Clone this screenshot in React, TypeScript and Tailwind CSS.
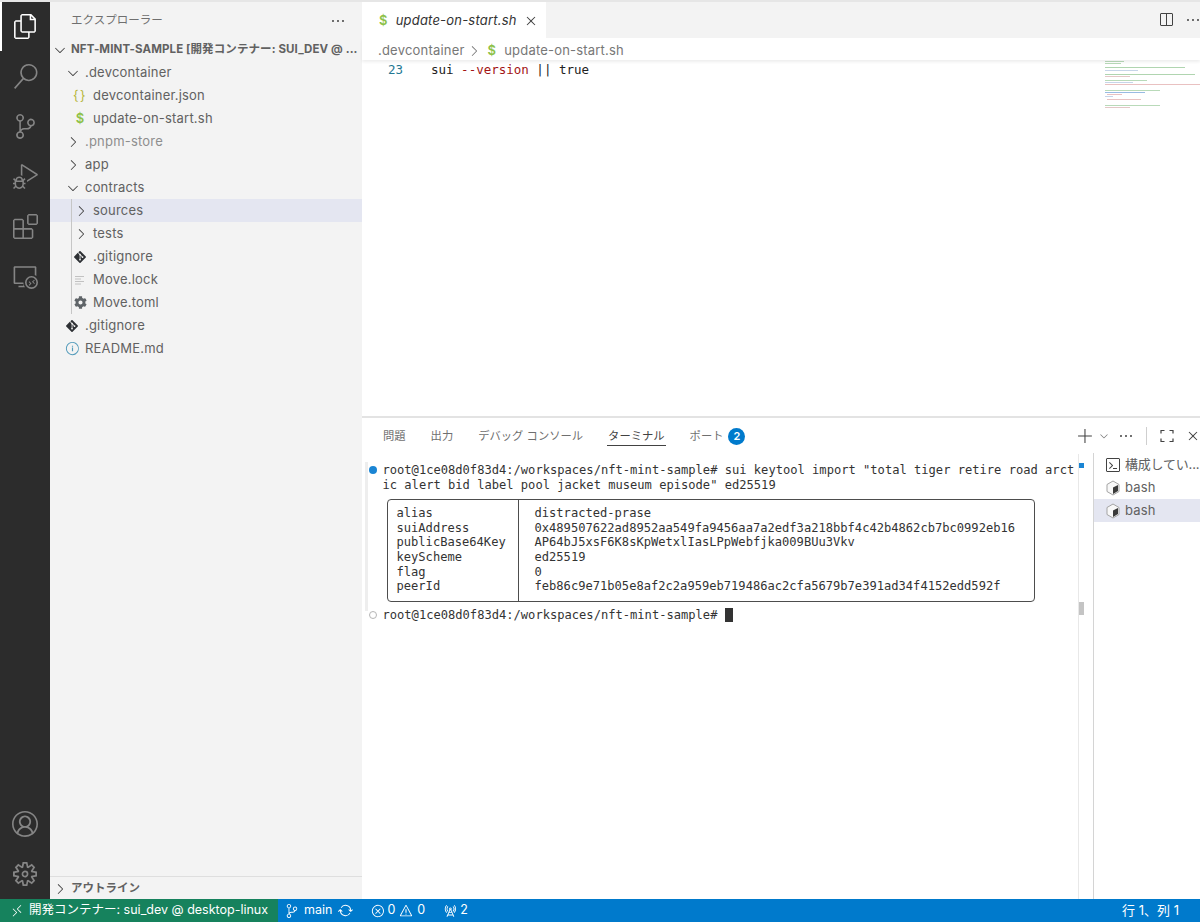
import React from "react";
import {
  VscAccount,
  VscAdd,
  VscChevronDown,
  VscChevronRight,
  VscClose,
  VscDebugAlt,
  VscEllipsis,
  VscError,
  VscExtensions,
  VscFiles,
  VscInfo,
  VscRadioTower,
  VscRemote,
  VscRemoteExplorer,
  VscSearch,
  VscSettingsGear,
  VscSourceControl,
  VscSplitHorizontal,
  VscSync,
  VscTerminal,
  VscWarning,
} from "react-icons/vsc";
import { SiGit } from "react-icons/si";
import { FaCog } from "react-icons/fa";

const UI_FONT = "font-['Inter','Noto_Sans_CJK_JP',sans-serif]";
const MONO_FONT = "font-['DejaVu_Sans_Mono','Noto_Sans_CJK_JP',monospace]";

function Dollar({ className = "" }: { className?: string }) {
  return <span className={`font-semibold text-[#8dc149] text-[13px] ${className}`}>$</span>;
}

function GitIcon() {
  return <SiGit size={12} className="text-[#2d3034]" />;
}

function LockIcon() {
  return (
    <svg width="12" height="12" viewBox="0 0 12 12" stroke="#c2c2c2" strokeWidth="1">
      <path d="M1 2.5h9M1 5h6M1 7.500h9M1 10h6" />
    </svg>
  );
}

function CornersIcon() {
  return (
    <svg width="16" height="16" viewBox="0 0 16 16" fill="none" stroke="#424242" strokeWidth="1.2">
      <path d="M2 5.500V2.500h3.500M10.500 2.500H14v3M14 10.500v3h-3.500M5.500 13.500H2v-3" />
    </svg>
  );
}

function BashIcon() {
  return (
    <svg width="16" height="16" viewBox="0 0 16 16" className="mr-[4px] shrink-0">
      <path d="M8 1l6 3.500v7L8 15l-6-3.500v-7z" fill="#f8f8f8" stroke="#a3a3a3" strokeWidth="1" />
      <path d="M8 7.500l5-2.500v6l-5 3z" fill="#3a3a3a" />
    </svg>
  );
}

type Row = {
  label: string;
  depth: number;
  kind: "open" | "closed" | "file";
  icon?: React.ReactNode;
  muted?: boolean;
  selected?: boolean;
  guide?: boolean;
};

const rows: Row[] = [
  { label: ".devcontainer", depth: 1, kind: "open" },
  {
    label: "devcontainer.json",
    depth: 2,
    kind: "file",
    icon: <span className="text-[13px] tracking-[1.500px] text-[#b7b73b]">{"{}"}</span>,
  },
  { label: "update-on-start.sh", depth: 2, kind: "file", icon: <Dollar /> },
  { label: ".pnpm-store", depth: 1, kind: "closed", muted: true },
  { label: "app", depth: 1, kind: "closed" },
  { label: "contracts", depth: 1, kind: "open" },
  { label: "sources", depth: 2, kind: "closed", selected: true, guide: true },
  { label: "tests", depth: 2, kind: "closed", guide: true },
  { label: ".gitignore", depth: 2, kind: "file", icon: <GitIcon />, guide: true },
  { label: "Move.lock", depth: 2, kind: "file", icon: <LockIcon />, guide: true },
  { label: "Move.toml", depth: 2, kind: "file", icon: <FaCog size={13} className="text-[#5f6468]" />, guide: true },
  { label: ".gitignore", depth: 1, kind: "file", icon: <GitIcon /> },
  { label: "README.md", depth: 1, kind: "file", icon: <VscInfo size={15} className="text-[#519aba]" /> },
];

function TreeRow({ row }: { row: Row }) {
  const chevronLeft = row.depth === 1 ? "pl-[15px]" : "pl-[23px]";
  const fileLeft = row.depth === 1 ? "pl-[14px]" : "pl-[22px]";
  return (
    <div
      className={`relative flex h-[23px] items-center text-[13px] tracking-[0.2px] ${row.selected ? "bg-[#e4e6f1]" : ""} ${
        row.kind === "file" ? fileLeft : chevronLeft
      } ${row.muted ? "text-[#8e8e8e]" : "text-[#616161]"}`}
    >
      {row.guide && <span className="absolute left-[21px] top-0 h-full w-px bg-[#c6c6c6]" />}
      {row.kind === "file" ? (
        <span className="mr-[5px] flex w-4 shrink-0 items-center justify-center">{row.icon}</span>
      ) : row.kind === "open" ? (
        <VscChevronDown size={16} className="mr-1 shrink-0 text-[#424242]" />
      ) : (
        <VscChevronRight size={16} className="mr-1 shrink-0 text-[#424242]" />
      )}
      <span>{row.label}</span>
    </div>
  );
}

function ActivityBar() {
  const top = [VscFiles, VscSearch, VscSourceControl, VscDebugAlt, VscExtensions, VscRemoteExplorer];
  return (
    <div className="flex w-[50px] shrink-0 flex-col justify-between bg-[#2c2c2c]">
      <div>
        {top.map((Icon, i) => (
          <div
            key={i}
            className={`flex items-center justify-center ${
              i === 0 ? "h-[49px] border-l-2 border-white pr-[2px] text-white" : "h-[50px] text-[#858585]"
            }`}
          >
            <Icon size={25} />
          </div>
        ))}
      </div>
      <div>
        <div className="flex h-[50px] items-center justify-center text-[#858585]">
          <VscAccount size={26} />
        </div>
        <div className="flex h-[50px] items-center justify-center text-[#858585]">
          <VscSettingsGear size={24} />
        </div>
      </div>
    </div>
  );
}

function Sidebar() {
  return (
    <div className="flex w-[312px] shrink-0 flex-col bg-[#f3f3f3]">
      <div className="flex h-[36px] items-center justify-between pl-[21px] pr-[16px] pt-px text-[11.500px] text-[#6f6f6f]">
        <span>エクスプローラー</span>
        <VscEllipsis size={16} className="text-[#424242]" />
      </div>
      <div className="flex h-[23px] items-center pl-[2px] text-[11.500px] font-bold tracking-[0.1px] text-[#616161]">
        <VscChevronDown size={16} className="mr-[3px] shrink-0 text-[#424242]" />
        <span className="whitespace-nowrap">NFT-MINT-SAMPLE [開発コンテナー: SUI_DEV @ ...</span>
      </div>
      <div className="flex-1">
        {rows.map((row, i) => (
          <TreeRow key={i} row={row} />
        ))}
      </div>
      <div className="flex h-[23px] items-center border-t border-[#dedede] pl-[2px] pt-px text-[11.500px] font-bold text-[#616161]">
        <VscChevronRight size={16} className="mr-[3px] text-[#424242]" />
        <span>アウトライン</span>
      </div>
    </div>
  );
}

function Minimap() {
  const lines = [
    ["#9ccb9c", 0, 1, 19],
    ["#9ccb9c", 0, 3, 16],
    ["#8fc48f", 0, 7, 80],
    ["#b0c4e0", 0, 10, 33],
    ["#8fc48f", 0, 14, 90],
    ["#d8b0b0", 0, 16, 25],
    ["#9ccb9c", 0, 20, 42],
    ["#b0c4e0", 0, 22, 28],
    ["#e0a8a8", 0, 24, 95],
    ["#9ccb9c", 0, 30, 55],
    ["#6f9fd8", 0, 32, 40],
    ["#e0a8a8", 2, 34, 15],
    ["#b0c4e0", 0, 36, 8],
    ["#e0a8a8", 2, 39, 34],
    ["#9ccb9c", 0, 45, 55],
    ["#d8b0b0", 0, 47, 25],
  ] as const;
  return (
    <svg width="95" height="50" className="absolute left-[743px] top-0 opacity-70">
      {lines.map(([color, x, y, w], i) => (
        <rect key={i} x={x} y={y} width={w} height="1" fill={color} />
      ))}
    </svg>
  );
}

function Editor() {
  return (
    <div className="flex min-h-0 flex-1 flex-col">
      <div className="flex h-[36px] shrink-0 bg-[#f3f3f3]">
        <div className="flex w-[184px] items-center bg-white pl-[17px] pt-px text-[13px] tracking-[0.2px] text-[#333333]">
          <Dollar className="mr-[8px]" />
          <span className="italic">update-on-start.sh</span>
          <VscClose size={16} className="ml-[6px] text-[#424242]" />
        </div>
        <div className="flex flex-1 items-center justify-end gap-[11px] text-[#424242]">
          <VscSplitHorizontal size={16} />
          <VscEllipsis size={16} className="mr-[-1px]" />
        </div>
      </div>
      <div className="z-10 flex h-[22px] shrink-0 items-center bg-white pl-4 pt-[3px] text-[13px] tracking-[0.2px] text-[#777777] shadow-[0_2px_3px_rgba(0,0,0,0.07)]">
        <span>.devcontainer</span>
        <VscChevronRight size={16} className="mx-px" />
        <Dollar className="ml-[5px] mr-[8px]" />
        <span>update-on-start.sh</span>
      </div>
      <div className={`relative flex-1 bg-white ${MONO_FONT} text-[12.500px] leading-[20px]`}>
        <div className="flex">
          <span className="w-[69px] pl-[26px] text-[#237893]">23</span>
          <span className="text-[#222222]">
            sui <span className="text-[#a31515]">--version</span> || true
          </span>
        </div>
        <Minimap />
      </div>
    </div>
  );
}

function PanelTabs() {
  const tabs = ["問題", "出力", "デバッグ コンソール"];
  return (
    <div className="flex h-[36px] shrink-0 items-center pl-[21px] pr-0 text-[11.300px] text-[#6f6f6f]">
      <div className="flex items-center gap-[25px]">
        {tabs.map((t) => (
          <span key={t}>{t}</span>
        ))}
        <span className="relative text-[#424242]">
          ターミナル
          <span className="absolute -bottom-[2px] -left-px -right-px h-px bg-[#424242]" />
        </span>
        <span className="flex items-center gap-[5px]">
          ポート
          <span className="flex h-[17px] w-[17px] items-center justify-center rounded-full bg-[#007acc] text-[11px] font-semibold text-white">
            2
          </span>
        </span>
      </div>
      <div className="ml-auto flex items-center text-[#424242]">
        <VscAdd size={17} />
        <VscChevronDown size={12} className="ml-[4px] text-[#777777]" />
        <VscEllipsis size={16} className="ml-[8px]" />
        <span className="mx-[12px] h-[18px] w-px bg-[#cfcfcf]" />
        <CornersIcon />
        <VscClose size={16} className="ml-[10px] mr-[-1px]" />
      </div>
    </div>
  );
}

const tableRows = [
  ["alias", "distracted-prase"],
  ["suiAddress", "0x489507622ad8952aa549fa9456aa7a2edf3a218bbf4c42b4862cb7bc0992eb16"],
  ["publicBase64Key", "AP64bJ5xsF6K8sKpWetxlIasLPpWebfjka009BUu3Vkv"],
  ["keyScheme", "ed25519"],
  ["flag", "0"],
  ["peerId", "feb86c9e71b05e8af2c2a959eb719486ac2cfa5679b7e391ad34f4152edd592f"],
];

function Terminal() {
  return (
    <div className={`relative min-w-0 flex-1 ${MONO_FONT} text-[12.100px] leading-[14.600px] text-[#333333]`}>
      <span className="absolute left-[3px] top-[8px] h-[149px] w-[3px] bg-[#eeeeee]" />
      <div className="pl-[20.500px] pt-[9px]">
        <div className="relative whitespace-pre">
          <span className="absolute left-[-14px] top-[3px] h-[8px] w-[8px] rounded-full bg-[#1a85d4]" />
          {'root@1ce08d0f83d4:/workspaces/nft-mint-sample# sui keytool import "total tiger retire road arct'}
        </div>
        <div className="whitespace-pre">{'ic alert bid label pool jacket museum episode" ed25519'}</div>
        <div className="ml-[4px] mt-[7px] flex h-[103px] w-[648px] rounded-[4px] border-[1.500px] border-[#4d4d4d]">
          <div className="w-[131px] border-r-[1.500px] border-[#4d4d4d] pl-[9px] pt-[6px]">
            {tableRows.map(([k]) => (
              <div key={k}>{k}</div>
            ))}
          </div>
          <div className="pl-[16px] pt-[6px]">
            {tableRows.map(([, v]) => (
              <div key={v}>{v}</div>
            ))}
          </div>
        </div>
        <div className="relative mt-[6px] flex items-center whitespace-pre">
          <span className="absolute left-[-14px] top-[3px] h-[8px] w-[8px] rounded-full border border-[#b5b5b5]" />
          root@1ce08d0f83d4:/workspaces/nft-mint-sample#{" "}
          <span className="inline-block h-[14px] w-[8px] bg-[#333333]" />
        </div>
      </div>
    </div>
  );
}

function TerminalScroll() {
  return (
    <div className="relative w-[15px] shrink-0 border-l border-[#e8e8e8]">
      <span className="absolute left-0 top-[9px] h-[5px] w-[5px] bg-[#1a85d4]" />
      <span className="absolute left-0 top-[148px] h-[13px] w-[5px] bg-[#c4c4c4]" />
    </div>
  );
}

function TerminalList() {
  return (
    <div className="-mt-px w-[107px] shrink-0 border-l border-[#d4d4d4] text-[13px] tracking-[0.2px] text-[#616161]">
      <div className="flex h-[23px] items-center whitespace-nowrap pl-[11px] tracking-[-0.2px]">
        <VscTerminal size={16} className="mr-[4px] shrink-0 text-[#424242]" />
        構成してい...
      </div>
      <div className="flex h-[23px] items-center pl-[11px]">
        <BashIcon />
        bash
      </div>
      <div className="flex h-[23px] items-center bg-[#e4e6f1] pl-[11px]">
        <BashIcon />
        bash
      </div>
    </div>
  );
}

function StatusBar() {
  return (
    <div className="flex h-[23px] shrink-0 items-center bg-[#007acc] text-[12.500px] text-white">
      <div className="flex h-full w-[278px] items-center bg-[#16825d] pl-[10px]">
        <VscRemote size={14} className="mr-[5px]" />
        <span className="whitespace-nowrap">開発コンテナー: sui_dev @ desktop-linux</span>
      </div>
      <VscSourceControl size={14} className="ml-[7px] mr-[5px]" />
      <span>main</span>
      <VscSync size={15} className="ml-[6px]" />
      <VscError size={14} className="ml-[18px] mr-[2px]" />
      <span>0</span>
      <VscWarning size={14} className="ml-[4px] mr-[4px]" />
      <span>0</span>
      <VscRadioTower size={14} className="ml-[18px] mr-[3px]" />
      <span>2</span>
      <span className="ml-auto pr-[21px] text-[13px]">行 1、列 1</span>
    </div>
  );
}

export default function App() {
  return (
    <div className={`flex h-[922px] w-[1200px] flex-col overflow-hidden bg-white ${UI_FONT}`}>
      <div className="h-[2px] shrink-0 bg-[#e6e6e6]" />
      <div className="flex min-h-0 flex-1">
        <ActivityBar />
        <Sidebar />
        <div className="flex min-w-0 flex-1 flex-col">
          <Editor />
          <div className="flex h-[483px] shrink-0 flex-col border-t-2 border-[#e3e3e3]">
            <PanelTabs />
            <div className="flex min-h-0 flex-1">
              <Terminal />
              <TerminalScroll />
              <TerminalList />
            </div>
          </div>
        </div>
      </div>
      <StatusBar />
    </div>
  );
}
